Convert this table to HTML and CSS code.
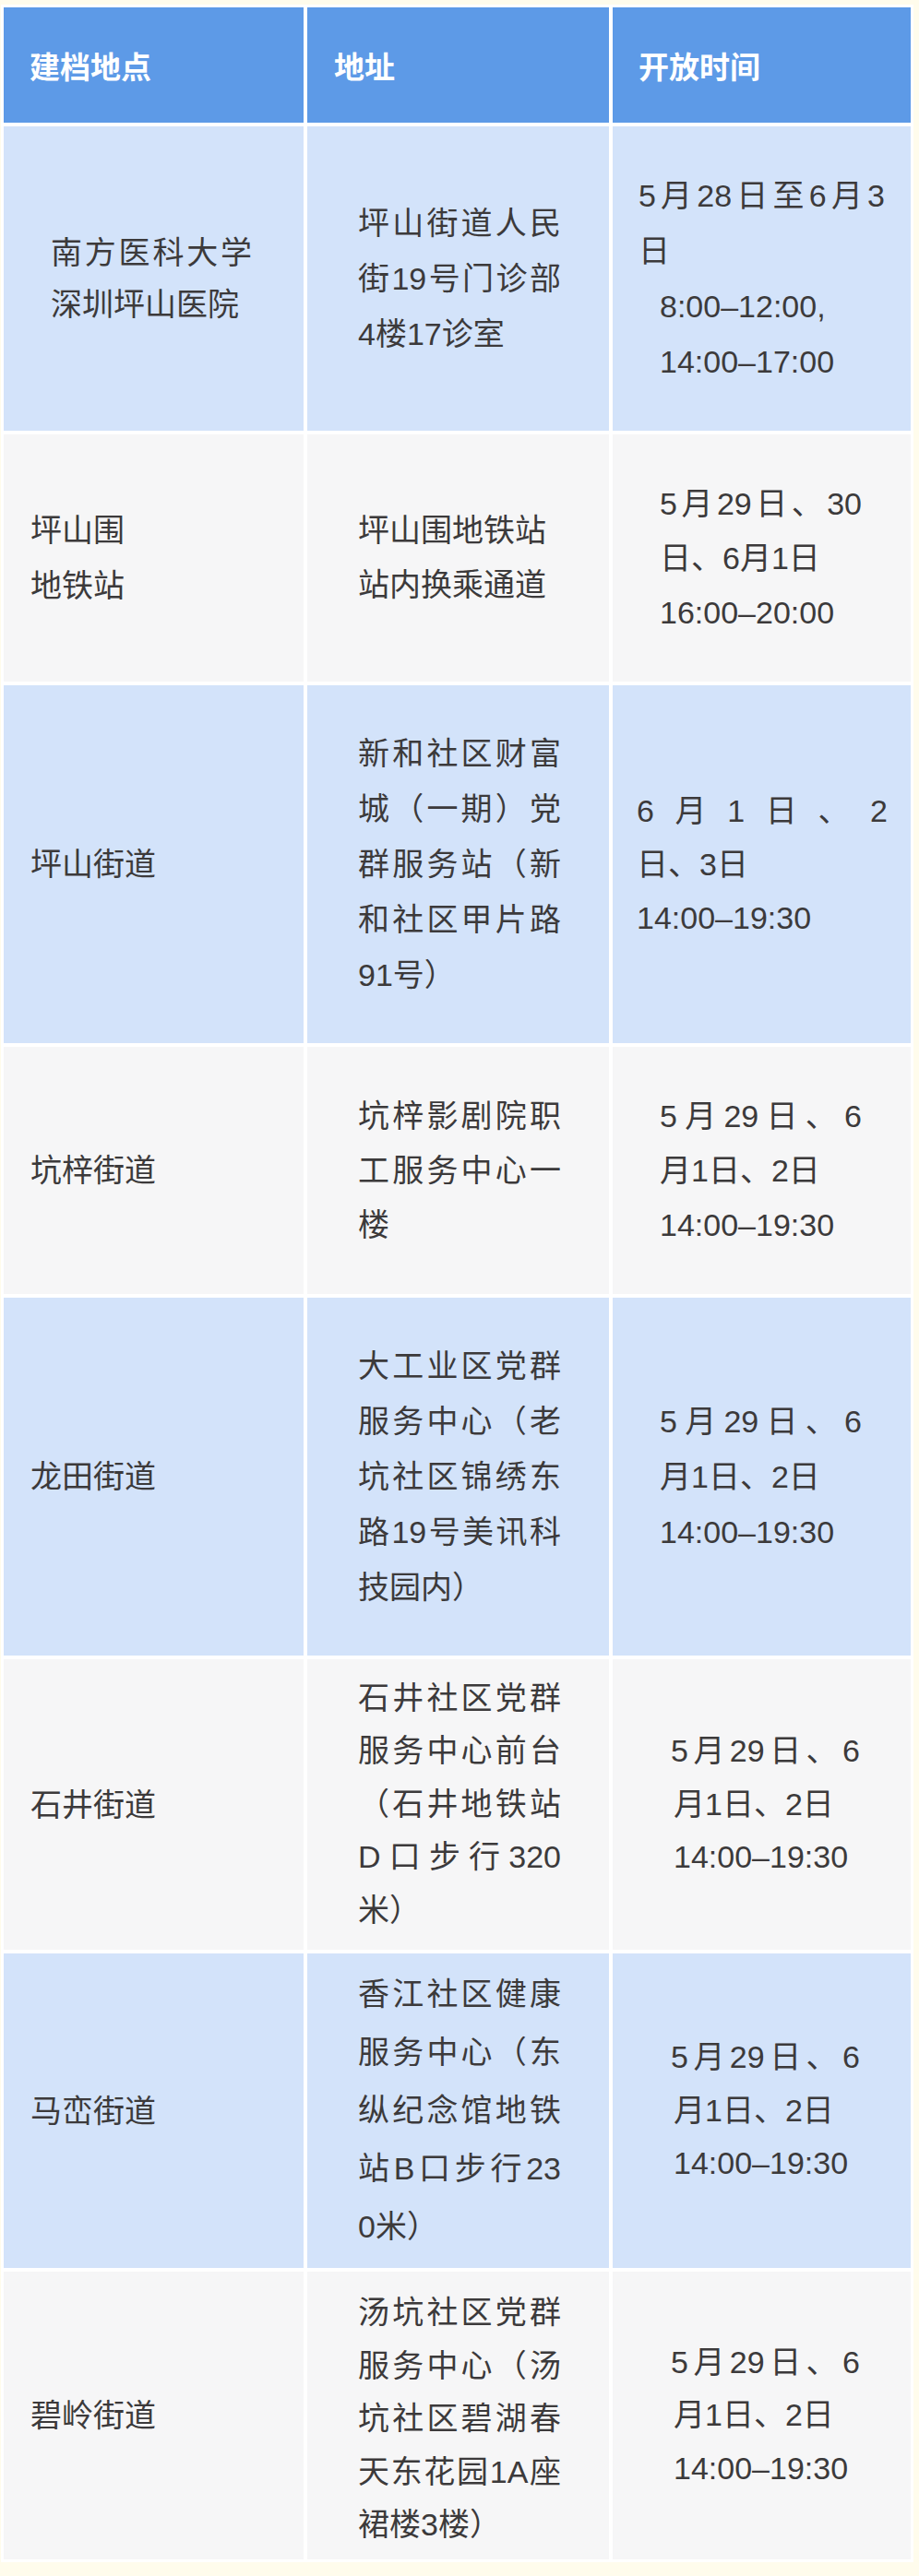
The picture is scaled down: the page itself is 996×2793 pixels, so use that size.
FILE: index.html
```html
<!DOCTYPE html>
<html lang="zh-CN">
<head>
<meta charset="utf-8">
<title>建档地点</title>
<link rel="stylesheet" href="styles.css">
</head>
<body>
<div class="table">
  <div class="cell head h1">建档地点</div>
  <div class="cell head h2">地址</div>
  <div class="cell head h3">开放时间</div>

  <div class="cell blue r1c1 lh56"><div class="ln j">南方医科大学</div><div class="ln">深圳坪山医院</div></div>
  <div class="cell blue c2 lh60"><div class="ln j">坪山街道人民</div><div class="ln j">街19号门诊部</div><div class="ln">4楼17诊室</div></div>
  <div class="cell blue r1c3 lh60"><div class="ln j">5月28日至6月3</div><div class="ln">日</div><div class="ln ind">8:00–12:00,</div><div class="ln ind">14:00–17:00</div></div>

  <div class="cell gray c1 lh60"><div class="ln">坪山围</div><div class="ln">地铁站</div></div>
  <div class="cell gray c2 lh59"><div class="ln">坪山围地铁站</div><div class="ln">站内换乘通道</div></div>
  <div class="cell gray c3a lh59"><div class="ln j">5月29日、30</div><div class="ln">日、6月1日</div><div class="ln">16:00–20:00</div></div>

  <div class="cell blue c1 lh60"><div class="ln">坪山街道</div></div>
  <div class="cell blue c2 lh60"><div class="ln j">新和社区财富</div><div class="ln j">城（一期）党</div><div class="ln j">群服务站（新</div><div class="ln j">和社区甲片路</div><div class="ln">91号）</div></div>
  <div class="cell blue r3c3 lh58"><div class="ln j">6月1日、2</div><div class="ln">日、3日</div><div class="ln">14:00–19:30</div></div>

  <div class="cell gray c1 lh60"><div class="ln">坑梓街道</div></div>
  <div class="cell gray c2 lh59"><div class="ln j">坑梓影剧院职</div><div class="ln j">工服务中心一</div><div class="ln">楼</div></div>
  <div class="cell gray c3a lh59"><div class="ln j">5月29日、6</div><div class="ln">月1日、2日</div><div class="ln">14:00–19:30</div></div>

  <div class="cell blue c1 lh60"><div class="ln">龙田街道</div></div>
  <div class="cell blue c2 lh60"><div class="ln j">大工业区党群</div><div class="ln j">服务中心（老</div><div class="ln j">坑社区锦绣东</div><div class="ln j">路19号美讯科</div><div class="ln">技园内）</div></div>
  <div class="cell blue c3a lh60"><div class="ln j">5月29日、6</div><div class="ln">月1日、2日</div><div class="ln">14:00–19:30</div></div>

  <div class="cell gray c1 lh60"><div class="ln">石井街道</div></div>
  <div class="cell gray c2 lh57"><div class="ln j">石井社区党群</div><div class="ln j">服务中心前台</div><div class="ln j">（石井地铁站</div><div class="ln j">D口步行320</div><div class="ln">米）</div></div>
  <div class="cell gray c3b lh57"><div class="ln j">5月29日、6</div><div class="ln">月1日、2日</div><div class="ln">14:00–19:30</div></div>

  <div class="cell blue c1 lh60"><div class="ln">马峦街道</div></div>
  <div class="cell blue c2 lh63"><div class="ln j">香江社区健康</div><div class="ln j">服务中心（东</div><div class="ln j">纵纪念馆地铁</div><div class="ln j">站B口步行23</div><div class="ln">0米）</div></div>
  <div class="cell blue c3b lh57"><div class="ln j">5月29日、6</div><div class="ln">月1日、2日</div><div class="ln">14:00–19:30</div></div>

  <div class="cell gray c1 lh60"><div class="ln">碧岭街道</div></div>
  <div class="cell gray c2 lh57 down"><div class="ln j">汤坑社区党群</div><div class="ln j">服务中心（汤</div><div class="ln j">坑社区碧湖春</div><div class="ln j">天东花园1A座</div><div class="ln">裙楼3楼）</div></div>
  <div class="cell gray c3b lh57"><div class="ln j">5月29日、6</div><div class="ln">月1日、2日</div><div class="ln">14:00–19:30</div></div>
</div>
</body>
</html>
```

FILE: styles.css
```css
html, body {
  margin: 0;
  padding: 0;
}
body {
  background: #fffcec;
  width: 996px;
  min-height: 2793px;
  font-family: "Liberation Sans", "Noto Sans CJK SC", sans-serif;
  color: #3c3a3b;
}
.table {
  margin: 5px 0 0 1px;
  width: 983px;
  padding: 3px;
  background: #ffffff;
  display: grid;
  grid-template-columns: 325px 327px 323px;
  grid-template-rows: 125px 330px 268px 388px 268px 388px 315px 341px 312px;
  column-gap: 4px;
  row-gap: 4px;
}
.cell {
  display: flex;
  flex-direction: column;
  justify-content: center;
  font-size: 34px;
  box-sizing: border-box;
}
.head {
  background: #5d9ae7;
  color: #ffffff;
  font-weight: bold;
  font-family: "Noto Sans CJK SC", sans-serif;
  font-size: 33px;
  line-height: 40px;
}
.h1 { padding-left: 28px; }
.h2 { padding-left: 29px; }
.h3 { padding-left: 28px; }
.blue { background: #d3e3fa; }
.gray { background: #f6f6f7; }

.ln { white-space: nowrap; }
.j {
  text-align: justify;
  text-align-last: justify;
}
.lh56 { line-height: 56px; }
.lh57 { line-height: 57.5px; }
.lh58 { line-height: 58px; }
.lh59 { line-height: 59px; }
.lh60 { line-height: 60px; }
.lh63 { line-height: 63px; }

.c1 { padding-left: 29px; }
.r1c1 { padding-left: 51px; }
.r1c1 .ln { width: 218px; }

.c2 { padding-left: 55px; }
.c2 .ln { width: 220px; }
.down { padding-top: 8px; }

.r1c3 { padding-left: 28px; }
.r1c3 .ln { width: 267px; }
.r1c3 .ind { padding-left: 23px; }

.c3a { padding-left: 51px; }
.c3a .ln { width: 219px; }

.r3c3 { padding-left: 26px; }
.r3c3 .ln { width: 272px; }

.c3b { padding-left: 63px; }
.c3b .ln { width: 205px; padding-left: 3px; }
.c3b .ln.j { padding-left: 0; }
```
